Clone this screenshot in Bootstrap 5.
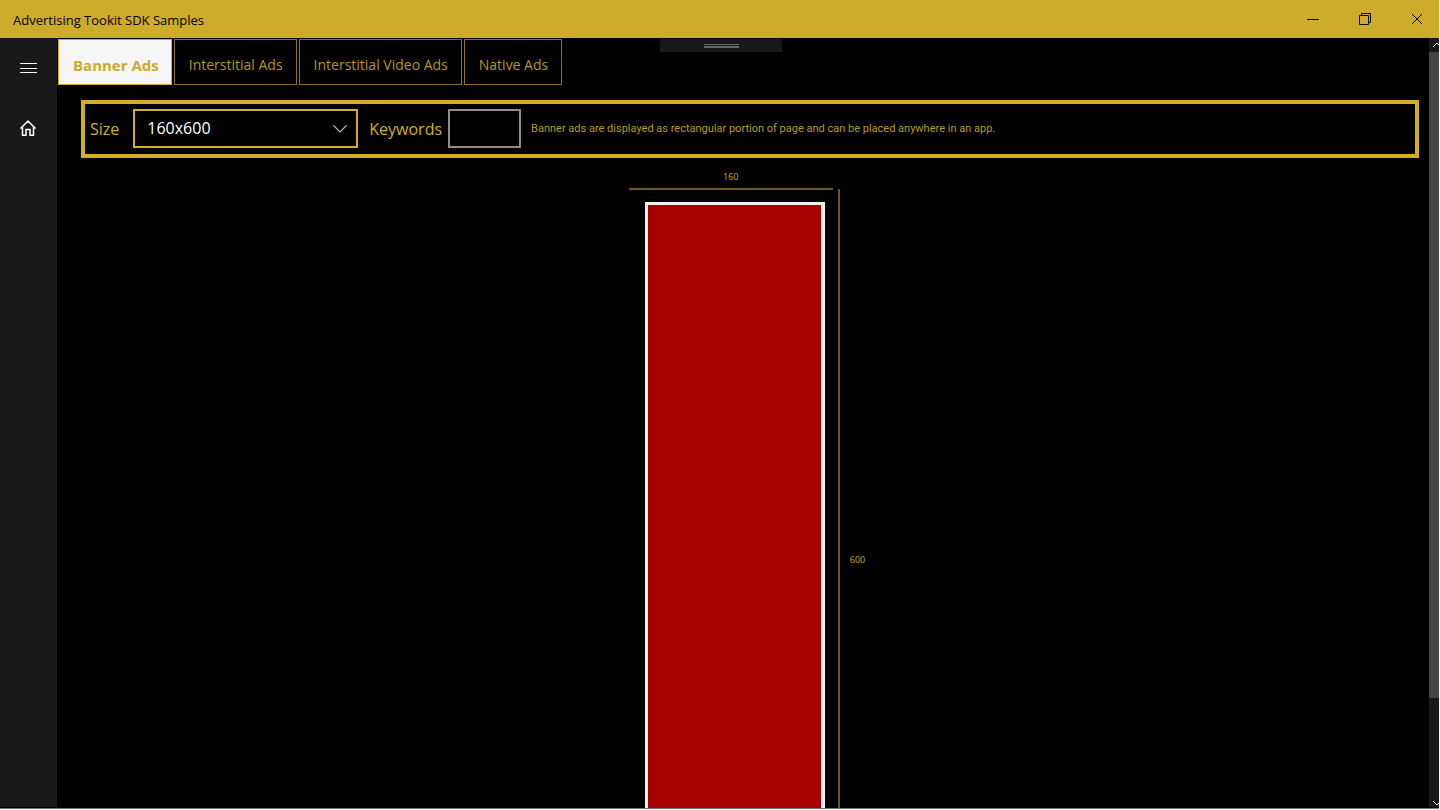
<!DOCTYPE html>
<html lang="en">
<head>
<meta charset="utf-8">
<meta name="viewport" content="width=device-width, initial-scale=1">
<title>Advertising Tookit SDK Samples</title>
<link rel="stylesheet" href="https://cdn.jsdelivr.net/npm/bootstrap@5.3.0/dist/css/bootstrap.min.css">
<style>
  :root { --gold: #ccac2a; --gold-line: #8a731b; --gold-dim: #6b5914; --rail: #191919; }
  body { font-family: "Open Sans", "Noto Sans", sans-serif; background: #fff; color: var(--gold); }
  .desktop-frame { padding: 0 1px 1px 0; }
  .app-window { background: #000; border-bottom: 1px solid #777; }
  .title-bar { height: 38px; background: var(--gold); color: #000; padding-left: 13px; }
  .title-text { font-size: 13px; line-height: 18px; padding-top: 1px; }
  .caption-btn { width: 52px; height: 38px; color: #000; }
  .caption-close { width: 44px; margin-left: 4px; }
  .side-rail { width: 57px; background: var(--rail); margin-bottom: 1px; }
  .rail-btn { width: 56px; height: 60px; color: #fff; }
  .sample-tabs { gap: 2px; padding: 1px 0 0 1px; }
  .sample-tabs .nav-link { height: 46px; padding: 5px 13px 0 14px; border: 1px solid var(--gold-line); border-radius: 0; color: #b5971f; font-size: 14px; line-height: 40px; }
  .sample-tabs .nav-link.active { background: #f5f5f5; color: var(--gold); font-size: 15px; font-weight: 700; border-color: var(--gold); padding-right: 12px; }
  .pull-handle { position: absolute; top: 1px; left: 50%; width: 122px; height: 13px; margin-left: -83px; background: var(--rail); }
  .pull-grip { width: 35px; height: 4px; border: solid #666; border-width: 1px 0 2px; }
  .content-area { padding: 15px 10px 0 24px; }
  .options-bar { height: 58px; border: 4px solid #d2ae27; padding: 0 0 1px 5px; }
  .options-bar label { font-size: 16px; color: #d2ae27; }
  .size-select { width: 225px; height: 39px; margin: 0 11px 0 14px; border: 2px solid #d2ae27; border-radius: 0; color: #fff; font-size: 16px; padding: 0 36px 1px 12px; background-color: #000;
    background-image: url("data:image/svg+xml,%3csvg xmlns='http://www.w3.org/2000/svg' viewBox='0 0 16 16'%3e%3cpath fill='none' stroke='%23bbb' stroke-width='1.2' d='M1.5 4.5L8 11l6.500-6.500'/%3e%3c/svg%3e"); background-size: 16px 16px; background-position: right 8px center; }
  .keyword-input { width: 73px; height: 39px; margin: 0 10px 0 6px; border: 2px solid #8c8c8c; border-radius: 0; background: #000; color: #fff; }
  .size-select:focus, .keyword-input:focus { box-shadow: none; background-color: #000; color: #fff; }
  .hint-text { font-family: Roboto, "Open Sans", sans-serif; font-size: 11px; line-height: 16px; padding-top: 1px; color: #b99a20; }
  .dim-text { font-size: 9px; line-height: 12px; color: var(--gold); }
  .ad-stage { padding: 13px 6px 0 0; }
  .ad-column { width: 204px; }
  .width-rule { height: 2px; margin-top: 5px; background: var(--gold-dim); }
  .ad-box { width: 180px; height: 725px; margin: 12px 0 0 8px; background: #a80000; border: 3px solid #f2f2f2; border-right-width: 4px; }
  .height-mark { margin: 18px 0 0 5px; height: 742px; border-left: 2px solid var(--gold-dim); padding-left: 10px; }
  .scroll-track { width: 10px; background: var(--rail); margin-bottom: 1px; overflow: hidden; color: #ddd; }
  .scroll-track svg { margin-left: 3px; }
  .scroll-thumb { flex: 0 0 84%; background: #454545; }
</style>
</head>
<body>
<div class="desktop-frame vh-100 d-flex flex-column overflow-hidden">
<div class="app-window d-flex flex-column flex-grow-1 overflow-hidden">
  <header class="title-bar d-flex align-items-center flex-shrink-0">
    <span class="title-text me-auto">Advertising Tookit SDK Samples</span>
    <button type="button" class="caption-btn btn rounded-0 border-0 p-0 d-flex align-items-center justify-content-center" aria-label="Minimize">
      <svg width="12" height="12" viewBox="0 0 12 12" shape-rendering="crispEdges"><path d="M0 6.500h12" stroke="currentColor"/></svg>
    </button>
    <button type="button" class="caption-btn btn rounded-0 border-0 p-0 d-flex align-items-center justify-content-center" aria-label="Restore">
      <svg width="12" height="12" viewBox="0 0 12 12" fill="none" stroke="currentColor"><path d="M.5 2.500h9v9h-9zM2.500 2V.5h9v9H10"/></svg>
    </button>
    <button type="button" class="caption-btn caption-close btn rounded-0 border-0 p-0 d-flex align-items-center justify-content-center" aria-label="Close">
      <svg width="12" height="12" viewBox="0 0 12 12" stroke="currentColor"><path d="M1 1l10 10M11 1L1 11"/></svg>
    </button>
  </header>

  <div class="d-flex flex-grow-1 overflow-hidden">
    <nav class="side-rail flex-shrink-0 d-flex flex-column" aria-label="Main">
      <button type="button" class="rail-btn btn rounded-0 border-0 p-0 d-flex align-items-center justify-content-center" aria-label="Menu">
        <svg width="18" height="12" viewBox="0 0 18 12" shape-rendering="crispEdges"><path d="M1 1.500h17M1 6.500h17M1 10.500h17" stroke="currentColor"/></svg>
      </button>
      <button type="button" class="rail-btn btn rounded-0 border-0 p-0 d-flex align-items-center justify-content-center" aria-label="Home">
        <svg width="18" height="18" viewBox="0 0 18 18" fill="none" stroke="currentColor" stroke-width="1.500"><path d="M1.500 9.500L9 2l7.500 7.500M3.500 8v8.200H7V10.500h4v5.700h3.500V8"/></svg>
      </button>
    </nav>

    <main class="position-relative flex-grow-1 overflow-hidden">
      <ul class="sample-tabs nav">
        <li class="nav-item"><a class="nav-link active" aria-current="page" href="#banner">Banner Ads</a></li>
        <li class="nav-item"><a class="nav-link" href="#interstitial">Interstitial Ads</a></li>
        <li class="nav-item"><a class="nav-link" href="#video">Interstitial Video Ads</a></li>
        <li class="nav-item"><a class="nav-link" href="#native">Native Ads</a></li>
      </ul>
      <div class="pull-handle d-flex align-items-center justify-content-center"><span class="pull-grip"></span></div>

      <div class="content-area">
        <form class="options-bar d-flex align-items-center">
          <label for="adSize">Size</label>
          <select id="adSize" class="size-select form-select"><option>160x600</option></select>
          <label for="keywords">Keywords</label>
          <input id="keywords" type="text" class="keyword-input form-control">
          <span class="hint-text">Banner ads are displayed as rectangular portion of page and can be placed anywhere in an app.</span>
        </form>

        <div class="ad-stage d-flex justify-content-center">
          <div class="ad-column d-flex flex-column align-items-center">
            <span class="dim-text">160</span>
            <div class="width-rule w-100"></div>
            <div class="ad-box"></div>
          </div>
          <div class="height-mark d-flex align-items-center"><span class="dim-text">600</span></div>
        </div>
      </div>
    </main>

    <div class="scroll-track flex-shrink-0 d-flex flex-column">
      <svg class="flex-shrink-0" width="10" height="14" viewBox="0 0 10 14" fill="none" stroke="currentColor"><path d="M1 9l4-4 4 4"/></svg>
      <div class="scroll-thumb"></div>
      <svg class="flex-shrink-0 mt-auto" width="10" height="12" viewBox="0 0 10 12" fill="none" stroke="currentColor"><path d="M1 6l4 4 4-4"/></svg>
    </div>
  </div>
</div>
</div>
<script src="https://cdn.jsdelivr.net/npm/bootstrap@5.3.0/dist/js/bootstrap.bundle.min.js"></script>
</body>
</html>
